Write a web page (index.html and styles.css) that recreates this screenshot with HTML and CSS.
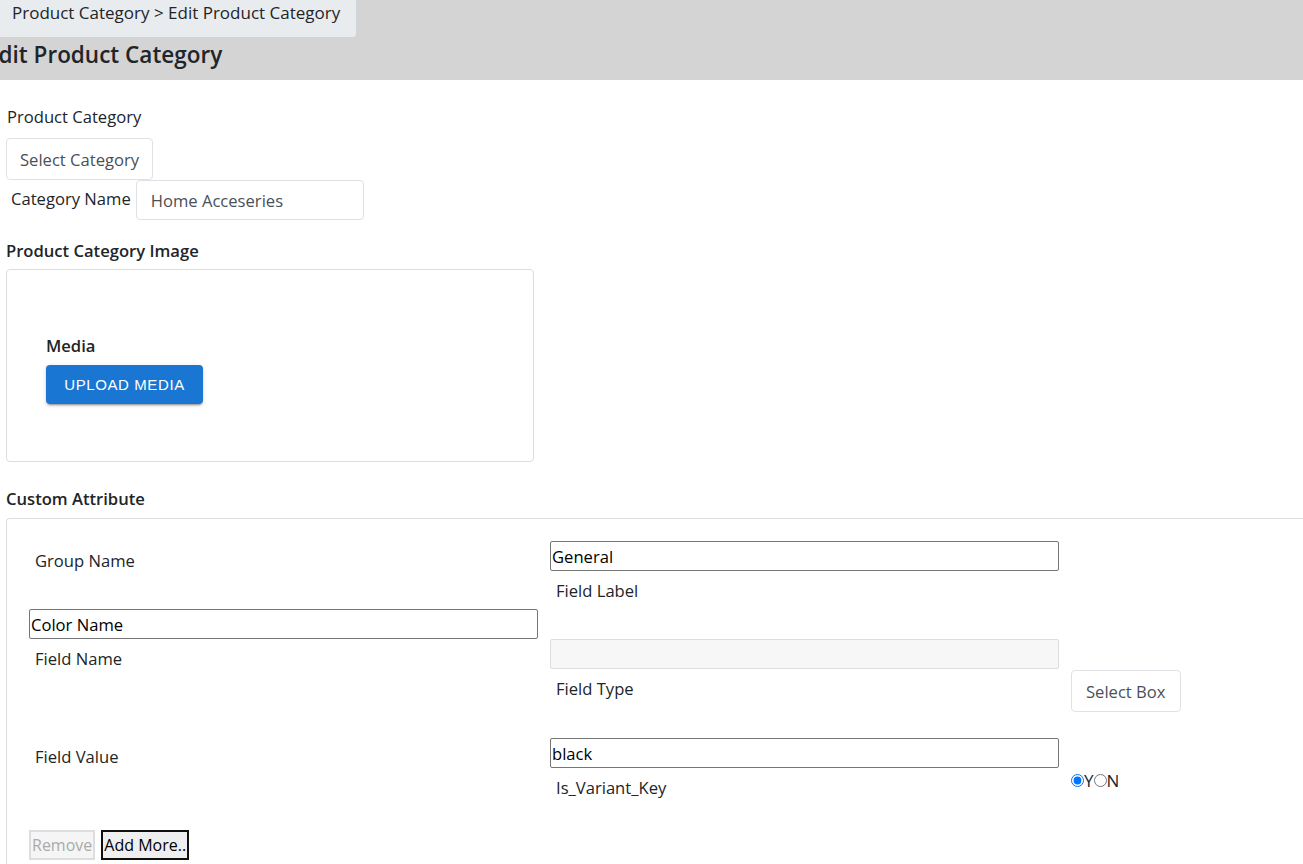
FILE: index.html
```html
<!DOCTYPE html>
<html>
<head>
<title>Edit Product Category</title>
<link rel="stylesheet" href="styles.css">
</head>
<body>
	<!-- header band -->
	<div class="topBar">
		<div class="crumb">Product Category &gt; Edit Product Category</div>
		<h2 class="pageTitle">Edit Product Category</h2>
	</div>

	<div class="content">
		<p class="lbl">Product Category</p>
		<button class="btnLight selCat">Select Category</button>
		<div class="nameRow">
			<label class="nameLbl">Category Name</label>
			<input class="nameInput" type="text" value="Home Acceseries">
		</div>

		<p class="secTitle">Product Category Image</p>
		<div class="imgBox">
			<p class="mediaLbl">Media</p>
			<button class="btnUpload">UPLOAD MEDIA</button>
		</div>

		<p class="secTitle attrTitle">Custom Attribute</p>
		<div class="attrBox">
			<div class="attrGrid">
				<!-- row 1 -->
				<div class="cell"><span class="txt pad1">Group Name</span></div>
				<div class="cell">
					<input class="plain" type="text" value="General">
					<span class="txt sub">Field Label</span>
				</div>
				<div class="cell"></div>
				<!-- row 2 -->
				<div class="cell">
					<input class="plain" type="text" value="Color Name">
					<span class="txt sub">Field Name</span>
				</div>
				<div class="cell pad2">
					<input class="plain off" type="text" disabled>
					<span class="txt sub">Field Type</span>
				</div>
				<div class="cell pad3">
					<button class="btnLight selBox">Select Box</button>
				</div>
				<!-- row 3 -->
				<div class="cell"><span class="txt pad4">Field Value</span></div>
				<div class="cell">
					<input class="plain" type="text" value="black">
					<span class="txt sub">Is_Variant_Key</span>
				</div>
				<div class="cell pad5">
					<span class="radios"><input type="radio" name="vk" checked>Y<input type="radio" name="vk">N</span>
				</div>
			</div>
			<div class="actions">
				<button class="btnSys" disabled>Remove</button>
				<button class="btnSys focus">Add More..</button>
			</div>
		</div>
	</div>
</body>
</html>
```

FILE: styles.css
```css
body {
	margin: 0;
	font-family: "Open Sans", "Noto Sans", sans-serif;
	font-size: 16.6px;
	color: #212529;
	background: #fff;
	overflow: hidden;
}
.topBar {
	background: #d4d4d4;
	height: 80px;
	overflow: hidden;
}
.crumb {
	background: #e9ecef;
	width: 344px;
	height: 37px;
	line-height: 26px;
	padding-left: 12px;
	border-bottom-right-radius: 4px;
	font-size: 17px;
}
.pageTitle {
	margin: 0 0 0 -14px;
	font-size: 22.5px;
	font-weight: 600;
	line-height: 36px;
}
.content { padding: 0 6px; }
.lbl { margin: 25px 0 9px 1px; line-height: 24px; }
.btnLight {
	font-family: inherit;
	font-size: 16.6px;
	color: #495057;
	background: #fff;
	border: 1px solid #dee2e6;
	border-radius: 4px;
	cursor: pointer;
}
.selCat { height: 42px; padding: 0 13px; }
.nameRow { display: flex; align-items: flex-start; }
.nameLbl { margin: 7px 5px 0 5px; }
.nameInput {
	width: 228px;
	height: 40px;
	box-sizing: border-box;
	padding: 0 14px;
	border: 1px solid #dee2e6;
	border-radius: 4px;
	font-family: inherit;
	font-size: 16.6px;
	color: #495057;
}
.secTitle {
	margin: 20px 0 7px 0;
	font-weight: 600;
	line-height: 22px;
}
.attrTitle { margin: 26px 0 8px 0; }
.imgBox {
	width: 528px;
	height: 193px;
	border: 1px solid #ddd;
	border-radius: 4px;
	padding: 64px 0 0 39px;
	box-sizing: border-box;
}
.mediaLbl { margin: 0 0 7px 0; font-weight: 600; line-height: 24px; }
.btnUpload {
	background: #1976d2;
	color: #fff;
	border: none;
	border-radius: 4px;
	height: 39px;
	width: 157px;
	font-family: "Liberation Sans", Arial, sans-serif;
	font-size: 15px;
	letter-spacing: 0.6px;
	box-shadow: 0 3px 1px -2px rgba(0,0,0,.2), 0 2px 2px 0 rgba(0,0,0,.14), 0 1px 5px 0 rgba(0,0,0,.12);
}
.attrBox {
	border: 1px solid #ddd;
	border-right: none;
	border-radius: 4px 0 0 4px;
	margin-right: -6px;
	padding: 22px 0 0 22px;
	height: 400px;
}
.attrGrid {
	display: grid;
	grid-template-columns: 509px 509px 200px;
	grid-template-rows: 68px 129px auto;
	column-gap: 12px;
}
.cell { display: flex; flex-direction: column; align-items: flex-start; }
.txt { display: block; line-height: 24px; }
.pad1 { margin: 8px 0 0 6px; }
.pad4 { margin: 7px 0 0 6px; }
.sub { margin: 8px 0 0 6px; }
.pad2 { padding-top: 30px; }
.pad3 { padding-top: 61px; }
.pad5 { padding-top: 31px; }
.plain {
	width: 509px;
	height: 30px;
	box-sizing: border-box;
	border: 1px solid #767676;
	border-radius: 2px;
	padding: 0 1px;
	font-family: inherit;
	font-size: 16.6px;
	color: #000;
}
.off { background: #f7f7f7; border-color: #ddd; }
.selBox { height: 42px; padding: 0 14px; }
.radios { display: flex; align-items: center; color: #212529; font-size: 17px; }
.radios input { margin: 0; width: 13px; height: 13px; }
.actions { margin-top: 30px; display: flex; gap: 6px; }
.btnSys {
	font-family: inherit;
	font-size: 16px;
	height: 30px;
	background: #efefef;
	border: 1px solid #767676;
	border-radius: 0;
	padding: 0 1px;
	color: #000;
}
.btnSys:disabled { color: #aaa; border: 2px solid #ddd; background: #f5f5f5; }
.focus { border: 2px solid #101010; }
```
